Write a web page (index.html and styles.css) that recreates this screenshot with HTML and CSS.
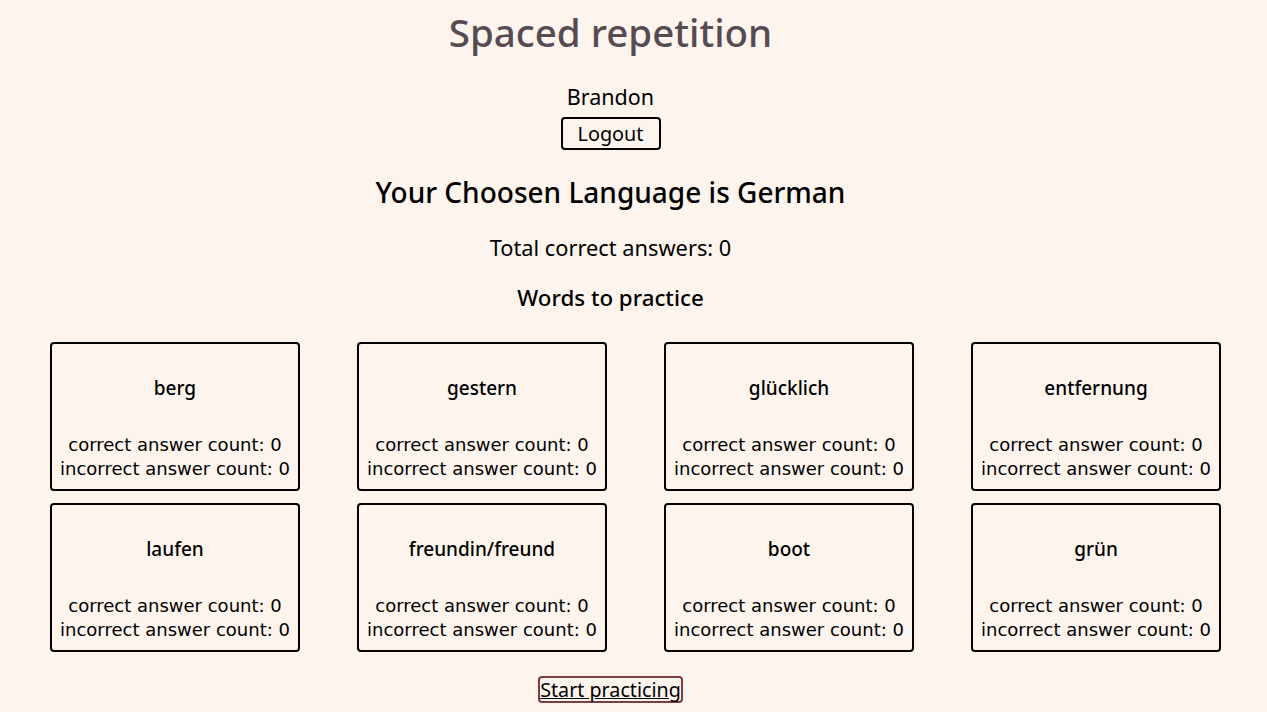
FILE: index.html
```html
<!DOCTYPE html>
<html lang="en">
<head>
<meta charset="utf-8">
<title>Spaced repetition</title>
<link rel="stylesheet" href="styles.css">
</head>
<body>
<div class="page">
<header class="header">
  <h1 class="title">Spaced repetition</h1>
  <div class="user">
    <span class="user-name">Brandon</span>
    <button class="btn-logout">Logout</button>
  </div>
</header>
<main class="dashboard">
  <h2 class="lang">Your Choosen Language is German</h2>
  <p class="total">Total correct answers: 0</p>
  <h3 class="words-title">Words to practice</h3>
  <ul class="words">
    <li class="card"><h4 class="word">berg</h4><p class="count">correct answer count: 0</p><p class="count">incorrect answer count: 0</p></li>
    <li class="card"><h4 class="word">gestern</h4><p class="count">correct answer count: 0</p><p class="count">incorrect answer count: 0</p></li>
    <li class="card"><h4 class="word">glücklich</h4><p class="count">correct answer count: 0</p><p class="count">incorrect answer count: 0</p></li>
    <li class="card"><h4 class="word">entfernung</h4><p class="count">correct answer count: 0</p><p class="count">incorrect answer count: 0</p></li>
    <li class="card"><h4 class="word">laufen</h4><p class="count">correct answer count: 0</p><p class="count">incorrect answer count: 0</p></li>
    <li class="card"><h4 class="word">freundin/freund</h4><p class="count">correct answer count: 0</p><p class="count">incorrect answer count: 0</p></li>
    <li class="card"><h4 class="word">boot</h4><p class="count">correct answer count: 0</p><p class="count">incorrect answer count: 0</p></li>
    <li class="card"><h4 class="word">grün</h4><p class="count">correct answer count: 0</p><p class="count">incorrect answer count: 0</p></li>
  </ul>
  <div class="start">
    <button class="btn-start"><a class="start-link" href="#">Start practicing</a></button>
  </div>
</main>
</div>
</body>
</html>
```

FILE: styles.css
```css
html, body {
  margin: 0;
  padding: 0;
}
body {
  background: #fdf4ee;
  color: #000;
  font-family: "Noto Sans", "Open Sans", sans-serif;
  text-align: center;
}
.page {
  width: 1221px;
}
.header {
  display: flex;
  flex-direction: column;
  align-items: center;
}
.title {
  margin: 7px 0 0;
  font-size: 38.5px;
  line-height: 50px;
  font-weight: 500;
  color: #574b52;
}
.user {
  display: flex;
  flex-direction: column;
  align-items: center;
  margin-top: 26px;
}
.user-name {
  font-size: 21.5px;
  line-height: 28px;
}
.btn-logout {
  margin-top: 6px;
  width: 100px;
  height: 33px;
  padding: 0;
  background: transparent;
  border: 2px solid #000;
  border-radius: 4px;
  font-family: inherit;
  font-size: 19.8px;
  line-height: 26px;
  color: #000;
}
.dashboard {
  display: flex;
  flex-direction: column;
  align-items: center;
}
.lang {
  margin: 23px 0 0;
  font-size: 28px;
  line-height: 38px;
  font-weight: 500;
}
.total {
  margin: 23px 0 0;
  font-size: 21.8px;
  line-height: 28px;
}
.words-title {
  margin: 21px 0 0;
  font-size: 22.3px;
  line-height: 30px;
  font-weight: 500;
}
.words {
  list-style: none;
  margin: 29px 0 0;
  padding: 0 0 0 50px;
  width: 1171px;
  box-sizing: content-box;
  display: grid;
  grid-template-columns: repeat(4, 250px);
  column-gap: 57px;
  row-gap: 12px;
}
.card {
  box-sizing: border-box;
  height: 149px;
  border: 2px solid #000;
  border-radius: 4px;
  padding: 30px 0 0;
  display: flex;
  flex-direction: column;
  align-items: center;
}
.word {
  margin: 0 0 31px;
  font-size: 19px;
  line-height: 28px;
  font-weight: 500;
}
.count {
  margin: 0;
  font-family: "DejaVu Sans", "Noto Sans", sans-serif;
  font-size: 18px;
  line-height: 23.5px;
  white-space: nowrap;
}
.start {
  margin-top: 24px;
}
.btn-start {
  box-sizing: border-box;
  height: 27px;
  padding: 0;
  background: transparent;
  border: 2px solid #7b3f42;
  border-radius: 4px;
  font-family: inherit;
  font-size: 19.7px;
  line-height: 21px;
}
.start-link {
  color: #000;
  text-decoration: underline;
}
```
